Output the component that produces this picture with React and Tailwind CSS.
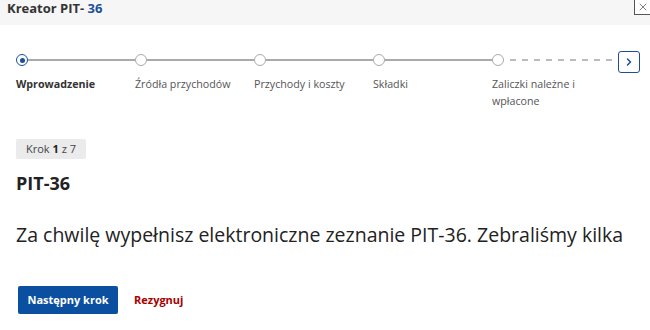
import { X, ChevronRight } from 'lucide-react'

const STEPS = ['Wprowadzenie', 'Źródła przychodów', 'Przychody i koszty', 'Składki', 'Zaliczki należne i wpłacone']

export default function App() {
  return (
    <div className="w-[650px] h-[330px] overflow-hidden bg-white text-[#222]" style={{ fontFamily: '"Open Sans", sans-serif' }}>
      <div className="h-[25px] bg-[#f6f6f6] flex items-start justify-between pl-[7px]">
        <h1 className="text-[13px] font-bold leading-[20px] text-[#333] -mt-[2px]">
          Kreator PIT- <span className="text-[#1b4f96]">36</span>
        </h1>
        <button className="w-[16px] h-[15px] border-l-[1.5px] border-b-[1.5px] border-[#555] bg-white flex items-center justify-center">
          <X size={12} strokeWidth={1.5} className="text-[#555]" />
        </button>
      </div>

      <div className="px-[16px] pt-[24px] flex items-start">
        <div className="flex flex-1">
          {STEPS.map((s, i) => (
            <div key={s} className="w-[119px] shrink-0">
              <div className="flex items-center h-[22px]">
                {i === 0 ? (
                  <div className="w-[12px] h-[12px] rounded-full border-[1.5px] border-[#1b4f96] flex items-center justify-center shrink-0">
                    <div className="w-[5px] h-[5px] rounded-full bg-[#1b4f96]" />
                  </div>
                ) : (
                  <div className="w-[12px] h-[12px] rounded-full border-[1.5px] border-[#aaa] shrink-0" />
                )}
                {i < STEPS.length - 1 ? (
                  <div className="flex-1 h-[2px] bg-[#aaa]" />
                ) : (
                  <div className="w-[102px] shrink-0 ml-[6px] h-[1.5px] bg-[repeating-linear-gradient(90deg,#bbb_0_6px,transparent_6px_12px)]" />
                )}
              </div>
              <div className={`mt-[5px] text-[10.7px] leading-[17px] pr-[16px] ${i === 0 ? 'font-bold text-[#333]' : 'text-[#555]'}`}>{s}</div>
            </div>
          ))}
        </div>
        <button className="mt-[2px] w-[22px] h-[22px] rounded-[3px] border-[1.5px] border-[#1b4f96] flex items-center justify-center mr-[-6px] ml-auto">
          <ChevronRight size={12} strokeWidth={3} className="text-[#1b4f96]" />
        </button>
      </div>

      <div className="px-[16px] mt-[25px]">
        <span className="inline-block bg-[#ebebeb] rounded-[2px] text-[11px] text-[#444] px-[10px] leading-[20px]">
          Krok <b className="text-[#222]">1</b> z 7
        </span>
        <h2 className="mt-[12px] text-[18px] font-bold leading-[24px] text-[#222]">PIT-36</h2>
        <p className="mt-[27px] text-[19.5px] leading-[26px] whitespace-nowrap text-[#222]">
          Za chwilę wypełnisz elektroniczne zeznanie PIT-36. Zebraliśmy kilka
        </p>
        <div className="mt-[38px] flex items-center gap-[16px] pl-[2px]">
          <button className="w-[100px] h-[28px] bg-[#0b4fa0] rounded-[2px] text-white text-[11px] font-bold">Następny krok</button>
          <button className="text-[11px] font-bold text-[#a80000]">Rezygnuj</button>
        </div>
      </div>
    </div>
  )
}
